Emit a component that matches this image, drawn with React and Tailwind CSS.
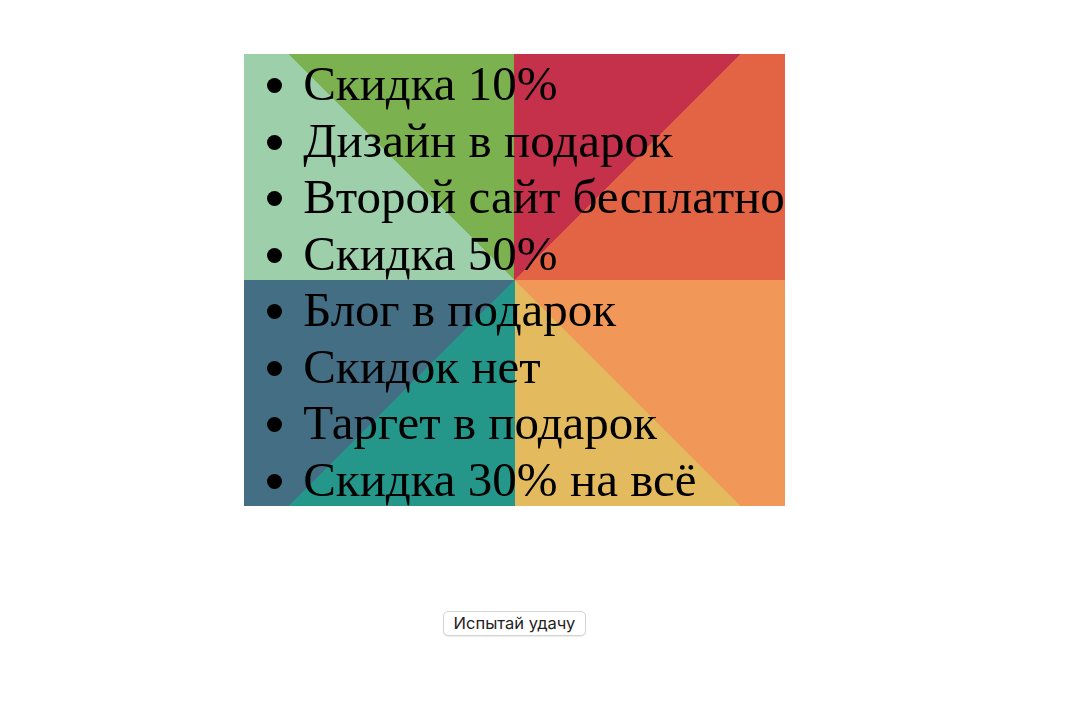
const prizes = [
  'Скидка 10%',
  'Дизайн в подарок',
  'Второй сайт бесплатно',
  'Скидка 50%',
  'Блог в подарок',
  'Скидок нет',
  'Таргет в подарок',
  'Скидка 30% на всё',
];

export default function App() {
  return (
    <div className="min-h-screen bg-white">
      <div className="flex w-[1029px] flex-col items-center pt-[54px]">
        {/* wheel of prizes, eight 45deg sectors */}
        <ul
          className="m-0 list-disc pl-[59px] pr-0 text-[49px] leading-[56.5px] text-black [background:conic-gradient(#c5304b_0deg_45deg,#e26445_45deg_90deg,#f19757_90deg_135deg,#e3bb5e_135deg_180deg,#24968a_180deg_225deg,#436e84_225deg_270deg,#9dcfab_270deg_315deg,#7bb24f_315deg_360deg)]"
          style={{ fontFamily: '"Liberation Serif", "Times New Roman", serif' }}
        >
          {prizes.map((p) => (
            <li key={p} className="whitespace-nowrap pt-[2px] -mb-[2px]">
              {p}
            </li>
          ))}
        </ul>

        <button
          className="mt-[105px] rounded-[5px] border border-[#d4d4d4] bg-white px-[10px] py-[2px] text-[16.5px] leading-[19px] text-[#222] shadow-[0_1px_1px_rgba(0,0,0,0.08)]"
          style={{ fontFamily: 'Inter, "Liberation Sans", sans-serif' }}
        >
          Испытай удачу
        </button>
      </div>
    </div>
  );
}
